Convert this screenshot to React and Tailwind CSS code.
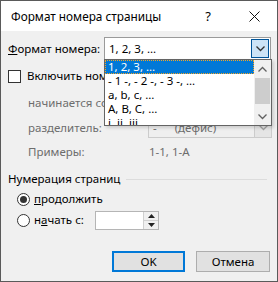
import React from "react";

const font = { fontFamily: '"Noto Sans", "Open Sans", sans-serif' };

const Chevron = ({ up, color = "#404040" }) => (
  <svg width="9" height="6" viewBox="0 0 9 6">
    <polyline
      points={up ? "0.5,5.5 4.5,1.5 8.5,5.5" : "0.5,0.5 4.5,4.5 8.5,0.5"}
      fill="none"
      stroke={color}
      strokeWidth="1.3"
    />
  </svg>
);

const items = [
  "1, 2, 3, …",
  "- 1 -, - 2 -, - 3 -, …",
  "a, b, c, …",
  "A, B, C, …",
  "i, ii, iii, …",
];

export default function App() {
  return (
    <div
      className="relative w-[278px] h-[282px] border border-[#5a5a5a] bg-[#f0f0f0] text-[11.5px] leading-[16px] text-black overflow-hidden whitespace-nowrap"
      style={font}
    >
      {/* Title bar */}
      <div className="h-[30px] bg-white flex items-center pl-[10px] text-[11.8px]">
        <span className="flex-1">Формат номера страницы</span>
        <span className="w-[46px] text-center text-[13px]">?</span>
        <span className="w-[46px] flex justify-center">
          <svg width="11" height="11" viewBox="0 0 11 11">
            <path d="M0.5 0.5 L10.5 10.5 M10.5 0.5 L0.5 10.5" stroke="#111" strokeWidth="1" />
          </svg>
        </span>
      </div>

      <div className="flex flex-col pl-[7px] pr-[6px]">
        {/* Format row */}
        <div className="mt-[6px] h-[23px] flex items-center">
          <span className="w-[96px] shrink-0">
            <span className="underline">Ф</span>ормат номера:
          </span>
          <div className="w-[167px] shrink-0 h-[23px] bg-white border border-[#9a9a9a] flex items-center">
            <span className="flex-1 pl-[4px]">1, 2, 3, …</span>
            <div className="w-[18px] h-[19px] mr-[1px] bg-[#cce4f7] border border-[#005499] flex items-center justify-center">
              <Chevron color="#333" />
            </div>
          </div>
        </div>

        {/* Checkbox row */}
        <div className="mt-[9px] h-[14px] flex items-center">
          <div className="w-[13px] h-[13px] shrink-0 bg-white border border-[#333]" />
          <span className="ml-[6px]">Включить номер главы</span>
        </div>

        <div className="mt-[10px] h-[20px] flex items-center pl-[20px] text-[#6d6d6d]">
          начинается со стиля
        </div>

        <div className="mt-[4px] h-[21px] flex items-center pl-[20px] text-[#6d6d6d]">
          <span className="w-[120px] shrink-0">разделитель:</span>
          <div className="w-[124px] shrink-0 h-[21px] bg-[#efefef] border border-[#cccccc] flex items-center">
            <span className="flex-1 pl-[4px] whitespace-pre">-      (дефис)</span>
            <div className="w-[17px] h-[19px] bg-[#e5e5e5] border-l border-[#cccccc] flex items-center justify-center">
              <Chevron color="#a0a0a0" />
            </div>
          </div>
        </div>

        <div className="mt-[4px] h-[20px] flex items-center pl-[20px] text-[#6d6d6d]">
          <span className="w-[121px] shrink-0">Примеры:</span>
          <span>1-1, 1-A</span>
        </div>

        {/* Group header */}
        <div className="mt-[9px] h-[16px] flex items-center">
          <span>Нумерация страниц</span>
          <div className="flex-1 h-px bg-[#dcdcdc] ml-[6px] mr-[4px]" />
        </div>

        <div className="mt-[4px] h-[16px] flex items-center pl-[9px]">
          <div className="w-[13px] h-[13px] shrink-0 rounded-full bg-white border border-[#333] flex items-center justify-center">
            <div className="w-[7px] h-[7px] rounded-full bg-[#333]" />
          </div>
          <span className="ml-[4px]">
            <span className="underline">п</span>родолжить
          </span>
        </div>

        <div className="mt-[4px] h-[18px] flex items-center pl-[9px]">
          <div className="w-[13px] h-[13px] shrink-0 rounded-full bg-white border border-[#333]" />
          <span className="ml-[4px] w-[61px] shrink-0">
            н<span className="underline">а</span>чать с:
          </span>
          <div className="w-[64px] h-[19px] shrink-0 bg-white border border-[#b5b5b5] flex justify-end">
            <div className="w-[15px] flex flex-col border-l border-[#d0d0d0]">
              <div className="flex-1 bg-[#f0f0f0] flex items-center justify-center border-b border-[#d0d0d0]">
                <svg width="7" height="4" viewBox="0 0 7 4"><polygon points="0,4 3.5,0 7,4" fill="#222" /></svg>
              </div>
              <div className="flex-1 bg-[#f0f0f0] flex items-center justify-center">
                <svg width="7" height="4" viewBox="0 0 7 4"><polygon points="0,0 3.5,4 7,0" fill="#222" /></svg>
              </div>
            </div>
          </div>
        </div>

        {/* Buttons */}
        <div className="mt-[22px] flex justify-end gap-[11px] pr-[1px]">
          <button className="w-[73px] h-[21px] bg-[#e1e1e1] border-2 border-[#0078d7] flex items-center justify-center">
            OK
          </button>
          <button className="w-[74px] h-[21px] bg-[#e1e1e1] border border-[#adadad] flex items-center justify-center">
            Отмена
          </button>
        </div>
      </div>

      {/* Open dropdown list */}
      <div className="absolute left-[103px] top-[58px] w-[168px] h-[67px] bg-white border border-[#646464] flex overflow-hidden shadow-[2px_2px_3px_rgba(0,0,0,0.15)]">
        <div className="flex-1 flex flex-col">
          {items.map((t, i) => (
            <div
              key={t}
              className={
                i === 0
                  ? "h-[14px] shrink-0 flex items-center pl-[2px] leading-[14px] bg-[#0078d7] text-white border border-dotted border-[#f5a623]"
                  : "h-[14px] shrink-0 flex items-center pl-[3px] leading-[14px]"
              }
            >
              {t}
            </div>
          ))}
        </div>
        <div className="w-[17px] bg-[#f0f0f0] flex flex-col items-center">
          <div className="h-[17px] flex items-center justify-center">
            <Chevron up color="#606060" />
          </div>
          <div className="w-[15px] h-[26px] bg-[#cdcdcd] mt-[1px]" />
          <div className="flex-1" />
          <div className="h-[17px] flex items-center justify-center">
            <Chevron color="#606060" />
          </div>
        </div>
      </div>
    </div>
  );
}
